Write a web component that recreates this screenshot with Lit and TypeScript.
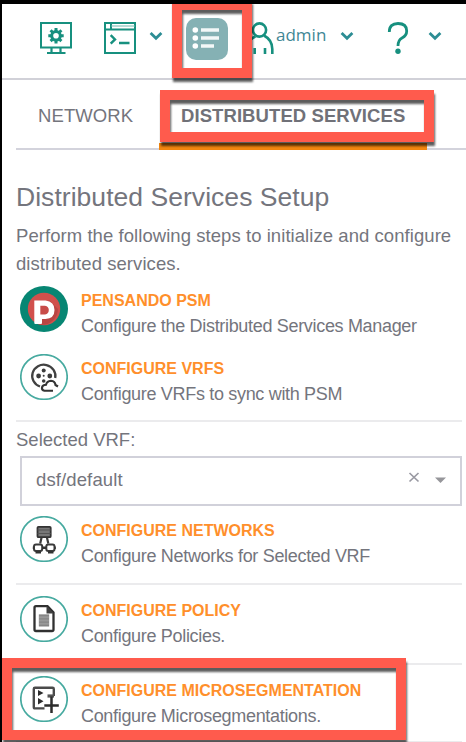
import { LitElement, html, css, svg } from "lit";
import { customElement } from "lit/decorators.js";

const chevron = html`<svg class="chev" width="14" height="10" viewBox="0 0 14 10"><path d="M1.6 2L7 7.2L12.4 2" fill="none" stroke="#2c8d94" stroke-width="2.8"/></svg>`;

const ring = svg`<ellipse cx="24" cy="23" rx="23.2" ry="22.3" fill="#fff" stroke="#47aaa0" stroke-width="1.7"/>`;

const icons = {
  psm: html`<svg width="48" height="46" viewBox="0 0 48 46">
    <ellipse cx="24" cy="23" rx="24" ry="23" fill="#078673"/>
    <circle cx="24" cy="23" r="16.2" fill="#d1504c"/>
    <path d="M29 14L38 23A16 16 0 0 1 21 38.8L15 37.5Z" fill="#b94543"/>
    <path d="M14.3 14.5H25.5Q34.5 15.5 34.5 24Q34.5 32.5 25.5 33H22V37Q22 38 21 38H15.3Q14.3 38 14.3 37Z" fill="#fff"/>
    <path d="M20.3 19.7H25Q28.8 20.5 28.8 24Q28.8 27.8 25 28.4H20.3Z" fill="#c84c49"/>
  </svg>`,
  vrf: html`<svg width="48" height="46" viewBox="0 0 48 46">${ring}
    <path d="M20 32.5A11.6 11.2 0 1 1 35.2 24" fill="none" stroke="#414141" stroke-width="2.3"/>
    <g fill="#3c3c3c"><circle cx="23.7" cy="16.4" r="2"/><circle cx="18.6" cy="22" r="2.4"/><circle cx="29.8" cy="22" r="2.4"/><circle cx="23.7" cy="27" r="1.8"/><circle cx="23.7" cy="21.8" r="1"/></g>
    <path d="M33 36.8H24.5Q21.5 36.2 22 33.5Q22.5 31 26 30.8Q27 27 31 26.8Q35 27 35.5 31L38 32.5" fill="none" stroke="#333" stroke-width="2.1"/>
  </svg>`,
  net: html`<svg width="48" height="46" viewBox="0 0 48 46">${ring}
    <rect x="17.5" y="10.8" width="13.2" height="10.4" rx="1" fill="#777" stroke="#333" stroke-width="1.8"/>
    <path d="M17.5 14H30.7M17.5 17.5H30.7" stroke="#555" stroke-width="1.2"/>
    <path d="M21.5 21.8L20.2 27.5M27 21.8L28.3 27.5" stroke="#3b3b3b" stroke-width="2.2"/>
    <g fill="#fff" stroke="#3b3b3b" stroke-width="2"><rect x="14" y="28.5" width="8.2" height="6.4" rx="2"/><rect x="26.3" y="28.5" width="8.2" height="6.4" rx="2"/></g>
    <path d="M15.5 36.3H21M28 36.3H33.5M12.8 31.7H14M34.5 31.7H35.8M22 31.7H26" stroke="#333" stroke-width="2.4"/>
  </svg>`,
  policy: html`<svg width="48" height="46" viewBox="0 0 48 46">${ring}
    <path d="M16 10.2H27.5L33.5 16.5V33.5Q33.5 35 32 35H16Q14.5 35 14.5 33.5V11.7Q14.5 10.2 16 10.2Z" fill="#fff" stroke="#303030" stroke-width="2.3"/>
    <path d="M26.5 10V17.5H33.7Z" fill="#404040"/>
    <rect x="18.8" y="18.4" width="10.4" height="12" fill="#999"/>
    <path d="M19 19.5H29M19 22.8H29M19 26.2H29M19 29.5H29" stroke="#858585" stroke-width="1.3"/>
  </svg>`,
  micro: html`<svg width="48" height="46" viewBox="0 0 48 46">${ring}
    <path d="M33.8 20V13Q33.8 11.8 32.5 11.8H15Q13.8 11.8 13.8 13V31Q13.8 32.4 15 32.4H24.5" fill="none" stroke="#4a4a4a" stroke-width="2.4"/>
    <path d="M18 14V20L23.5 17.1ZM18 22V28.5L23.5 25.2Z" fill="#2d2d2d"/>
    <path d="M27.5 20H34" stroke="#555" stroke-width="3.2"/>
    <path d="M31.5 20.5V37M24.3 29.4H38.8" stroke="#2c2c2c" stroke-width="2.5"/>
  </svg>`,
};

const step = (icon: keyof typeof icons, title: string, desc: string) => html`
  <div class="step">${icons[icon]}
    <div class="words"><div class="name">${title}</div><div class="desc">${desc}</div></div>
  </div>`;

@customElement("app-root")
export class AppRoot extends LitElement {
  static styles = css`
    :host { display: block; position: relative; box-sizing: border-box; width: 466px; height: 742px; overflow: hidden;
      background: #fff; border-top: 4px solid #000; border-left: 2px solid #000;
      font-family: "Liberation Sans", Arial, sans-serif; font-size: 18.5px; color: #74757d; white-space: nowrap; }
    * { box-sizing: border-box; }
    svg { display: block; flex: none; }
    header { display: flex; height: 76px; padding: 14px 0 0 38px; border-bottom: 2px solid #d1d1d8; }
    header > svg, .user { margin-top: 4px; }
    .term { margin-left: 32px; }
    header > .chev { margin: 13px 0 0 13px; }
    header > .list { margin: 0 0 0 23px; }
    .user { display: flex; margin-left: 23px; height: 32px; }
    .admin { width: 66px; padding-left: 2px; font: 17px/26px "Open Sans", "Noto Sans", sans-serif; color: #3f8795; }
    .user .chev { margin-top: 9px; }
    header > .help { margin-left: 33px; }
    header > .last { margin-left: 19px; }
    nav { display: flex; height: 70px; margin-left: 14px; border-bottom: 2px solid #d3d3dc; }
    .tab { height: 70px; padding: 26px 0 0 22px; width: 143px; line-height: 20px; letter-spacing: .1px; }
    .tab.on { width: 268px; font-weight: bold; border-bottom: 7px solid #f3860f; letter-spacing: .08px; color: #707178; }
    main { padding: 0 4px 0 14px; }
    h1 { margin: 0; padding-top: 32px; font-size: 26.5px; line-height: 30px; font-weight: normal; letter-spacing: .04px; }
    p { margin: 10px 0 -1px; line-height: 28px; letter-spacing: .06px; }
    .step { display: flex; height: 68px; padding: 9px 0 0 4px; }
    .words { padding-left: 13px; }
    .name { font-size: 16px; font-weight: bold; line-height: 18px; padding-top: 6px; color: #ff8f2b; }
    .desc { font-size: 18px; line-height: 22px; padding-top: 5px; letter-spacing: -.32px; }
    .line { height: 2px; background: #ebebed; }
    .first { margin-top: 7px; }
    .label { padding-top: 7px; line-height: 21px; height: 34px; }
    .select { display: flex; margin: 0 0 1px 4px; height: 50px; border: 2px solid #d1d1da; padding: 0 14px; }
    .value { flex: 1; line-height: 44px; letter-spacing: .12px; }
    .select svg { margin-top: 14px; }
    .tall { height: 76px; }
    .wide { height: 78px; padding-top: 2px; }
    .end { height: 76px; }
    .mark { position: absolute; border: 10px solid #ff5b4d; filter: drop-shadow(1px 4.5px 1.2px rgba(0,0,0,.64)); }
    .m1 { left: 170px; top: -4px; width: 80px; height: 78px; }
    .m2 { left: 158px; top: 86px; width: 274px; height: 52px; }
    .m3 { left: 0; top: 654px; width: 404px; height: 82px; }
  `;

  render() {
    return html`
      <header>
        <svg width="32" height="32" viewBox="0 0 32 32" fill="none" stroke="#17907f">
          <rect x="1" y="1" width="30" height="24.5" stroke-width="2"/>
          <path d="M11.5 26V30.5M20.5 26V30.5M7 31H25.5" stroke-width="2.2"/>
          <g stroke-width="3"><path d="M16 6V9M16 18.5V21.5M8.3 13.8H11M21 13.8H23.7M10.6 8.3L13 10.7M19 16.7L21.4 19.1M21.4 8.3L19 10.7M10.6 19.1L13 16.7"/><circle cx="16" cy="13.8" r="4.3"/></g>
        </svg>
        <svg class="term" width="32" height="32" viewBox="0 0 32 32" fill="none" stroke="#17907f">
          <rect x="1" y="1" width="30" height="30" stroke-width="2"/>
          <path d="M1 7.5H31M7 1V7" stroke-width="2"/><path d="M7 4H31" stroke="#6fb9ae" stroke-width="1"/>
          <path d="M6.7 13.2L11 17.4L6.7 21.6M15 21H25.5" stroke-width="2.4"/>
        </svg>
        ${chevron}
        <svg class="list" width="42" height="42" viewBox="0 0 42 42">
          <rect width="42" height="42" rx="10" fill="#85b1b4"/>
          <g fill="#fff"><circle cx="9.3" cy="12" r="2.8"/><circle cx="9.3" cy="20" r="2.8"/><circle cx="9.3" cy="28" r="2.8"/></g>
          <path d="M15 12H33M15 20H33M15 28H28" stroke="#f3f8f8" stroke-width="3.4"/>
        </svg>
        <div class="user">
          <svg width="23" height="32" viewBox="0 0 23 32" fill="none" stroke="#17907f" stroke-width="2.6">
            <circle cx="8.5" cy="8" r="6.6"/>
            <path d="M-4 32V27Q-4 18 4.5 14.5M13 13.5Q21.3 18 21.3 27V32"/><path d="M3.7 26V32M14 26V32"/>
          </svg>
          <span class="admin">admin</span>${chevron}
        </div>
        <svg class="help" width="22" height="32" viewBox="0 0 22 32">
          <path d="M2.3 10Q2.3 1.5 11 1.5Q19.7 1.5 19.7 9Q19.7 13.5 15 16Q11 18.2 11 24" fill="none" stroke="#17907f" stroke-width="2.8"/>
          <circle cx="11" cy="29.2" r="2.7" fill="#17907f"/>
        </svg>
        <svg class="chev last" width="14" height="10" viewBox="0 0 14 10"><path d="M1.6 2L7 7.2L12.4 2" fill="none" stroke="#2c8d94" stroke-width="2.8"/></svg>
      </header>
      <nav><div class="tab">NETWORK</div><div class="tab on">DISTRIBUTED SERVICES</div></nav>
      <main>
        <h1>Distributed Services Setup</h1>
        <p>Perform the following steps to initialize and configure<br>distributed services.</p>
        ${step("psm", "PENSANDO PSM", "Configure the Distributed Services Manager")}
        ${step("vrf", "CONFIGURE VRFS", "Configure VRFs to sync with PSM")}
        <div class="line first"></div>
        <div class="label">Selected VRF:</div>
        <div class="select">
          <span class="value">dsf/default</span>
          <svg width="39" height="18" viewBox="0 0 39 18"><path d="M2.5 1L11.5 9.5M11.5 1L2.5 9.5" stroke="#9999a2" stroke-width="1.7"/><path d="M28 5.5H39L33.5 11Z" fill="#96969a"/></svg>
        </div>
        <div class="tall">${step("net", "CONFIGURE NETWORKS", "Configure Networks for Selected VRF")}</div>
        <div class="line"></div>
        <div class="wide">${step("policy", "CONFIGURE POLICY", "Configure Policies.")}</div>
        <div class="line"></div>
        <div class="wide end">${step("micro", "CONFIGURE MICROSEGMENTATION", "Configure Microsegmentations.")}</div>
        <div class="line"></div>
      </main>
      <div class="mark m1"></div><div class="mark m2"></div><div class="mark m3"></div>
    `;
  }
}
